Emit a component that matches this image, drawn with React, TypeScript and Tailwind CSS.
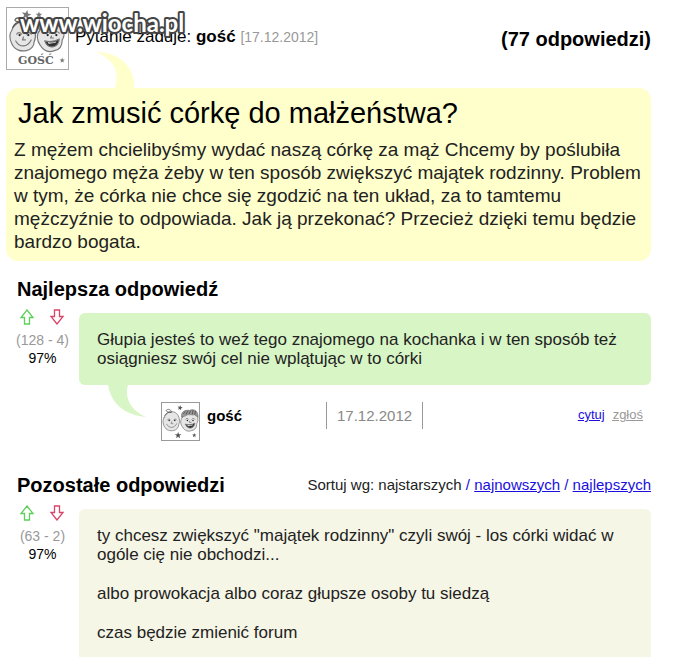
type VotesProps = {
    up: number
    down: number
    percent: number
}

const Faces = () => (
    <g fill="#e6e6e6" stroke="#777" strokeWidth="1.2" strokeLinecap="round" strokeLinejoin="round">
        <path d="M5 23 C2 27 3 33 5 37 C8 44 15 45 20 44 C25 43 28 39 28 35 C31 29 29 21 25 17 C19 11 8 14 5 23Z" />
        <path d="M34 23 C30 27 31 34 34 38 C38 45 44 46 49 44 C55 43 57 38 57 33 C61 27 58 19 54 15 C47 11 37 14 34 23Z" />
        <path d="M6 20 C8 16 12 14 16 15 C12 14 6 14 9 11 C12 9 17 11 17 15" fill="none" stroke="#555" />
        <path d="M33 22 C31 15 38 10 45 12 C53 8 60 14 59 23 C57 19 55 22 53 18 C50 21 48 17 45 19 C42 17 40 22 33 22Z" fill="#999" />
        <path d="M36 17 L39 14 M40 18 L43 13 M45 17 L47 13 M50 17 L51 12 M54 18 L55 13" fill="none" stroke="#444" />
        <path d="M10 27 C11 25 14 25 15 27 M20 27 C21 25 24 25 25 27 M9 34 C13 41 21 41 25 33" fill="none" />
        <path d="M39 26 C40 24 43 24 44 26 M49 26 C50 24 53 24 54 26" fill="none" />
        <path d="M39 34 C44 35 49 35 54 32 C53 42 42 43 39 34Z" fill="#333" />
        <path d="M42 35 C45 36 49 36 51 34 L50 36 L43 37Z" fill="#fff" stroke="none" />
        <g fill="#222" stroke="none">
            <circle cx="13" cy="28" r="1.2" />
            <circle cx="22" cy="28" r="1.2" />
            <circle cx="42" cy="28" r="1.2" />
            <circle cx="51" cy="28" r="1.2" />
        </g>
        <path d="M17 30 L16 33 L19 33 M46 29 L45 31 L48 31" fill="none" />
    </g>
)

const star = "M0 -5 L1.3 -1.7 L5 -1.5 L2.1 0.8 L3 4.5 L0 2.4 L-3 4.5 L-2.1 0.8 L-5 -1.5 L-1.3 -1.7Z"

const GuestAvatar = () => (
    <div className="relative h-[63px] w-[63px] shrink-0 border border-[#aaa] bg-white">
        <svg viewBox="0 0 63 63" className="h-full w-full" aria-hidden="true">
            <Faces />
            <g fill="#777">
                <path d={star} transform="translate(20 7) rotate(12)" />
                <path d={star} transform="translate(33 7) scale(.7)" />
                <path d={star} transform="translate(57 54) scale(.55)" />
            </g>
        </svg>
        <span className="absolute bottom-0 left-[11px] font-['DejaVu_Serif',serif] text-[11px] leading-4 font-bold text-[#666]">
            GOŚĆ
        </span>
    </div>
)

const SmallAvatar = () => (
    <svg viewBox="0 0 39 39" className="h-[39px] w-[39px] shrink-0 border border-[#999]" aria-hidden="true">
        <g transform="translate(-1 0) scale(.66)">
            <Faces />
        </g>
        <g fill="#555">
            <path d={star} transform="translate(19 5) rotate(12) scale(.55)" />
            <path d={star} transform="translate(17 34) scale(.7)" />
            <path d={star} transform="translate(34 34) scale(.45)" />
        </g>
    </svg>
)

const Arrow = ({ down = false }: { down?: boolean }) => (
    <svg
        viewBox="0 0 14 16"
        className={down ? "h-4 w-3.5 rotate-180" : "h-4 w-3.5"}
        fill="#fff"
        stroke={down ? "#d8466a" : "#5fd05a"}
        strokeWidth="1.3"
        aria-hidden="true"
    >
        <path d="M7 1 L13 8.5 H9.5 V15 H4.5 V8.5 H1 Z" />
    </svg>
)

const Votes = ({ up, down, percent }: VotesProps) => (
    <div className="flex w-[51px] shrink-0 flex-col items-center text-sm leading-[18px]">
        <div className="mb-1.5 flex w-full justify-between pr-1 pl-[3px]">
            <button type="button" aria-label="Głosuj za" className="cursor-pointer">
                <Arrow />
            </button>
            <button type="button" aria-label="Głosuj przeciw" className="cursor-pointer">
                <Arrow down />
            </button>
        </div>
        <span className="whitespace-nowrap text-[#999]">({up} - {down})</span>
        <span>{percent}%</span>
    </div>
)

const App = () => {
    const sortLinks = ["najnowszych", "najlepszych"]

    return (
        <div className="flex min-h-screen flex-col bg-white pt-[7px] pr-[22px] pl-1.5 font-['Liberation_Sans',Arial,sans-serif] text-black">
            <header className="relative flex h-[81px] items-start">
                <GuestAvatar />
                <p className="mt-5 ml-1.5 text-[17px] leading-5">
                    Pytanie zaduje: <b>gość</b>{" "}
                    <span className="text-sm text-[#999]">[17.12.2012]</span>
                </p>
                <strong className="mt-5 ml-auto text-xl leading-6">(77 odpowiedzi)</strong>

                {/* Watermark */}
                <svg className="absolute top-0 left-2 h-10 w-48 overflow-visible">
                    <text
                        x="6"
                        y="25"
                        fill="#fff"
                        stroke="#444"
                        strokeWidth="4"
                        strokeLinejoin="round"
                        paintOrder="stroke"
                        className="font-['Lato',sans-serif] text-2xl font-bold"
                    >
                        www.wiocha.pl
                    </text>
                </svg>

                {/* Speech bubble tail */}
                <svg viewBox="0 0 40 36" className="absolute bottom-0 left-[90px] h-9 w-10" fill="#ffffcc" aria-hidden="true">
                    <path d="M0 0 C22 0 40 14 38 36 H19 C25 18 15 6 0 0Z" />
                </svg>
            </header>

            <section className="rounded-xl bg-[#ffffcc] px-2 pt-2 pb-2">
                <h1 className="ml-1 text-[29px] leading-[34px]">Jak zmusić córkę do małżeństwa?</h1>
                <p className="mt-2 text-[19px] leading-[23px] text-[#222]">
                    Z mężem chcielibyśmy wydać naszą córkę za mąż Chcemy by poślubiła
                    znajomego męża żeby w ten sposób zwiększyć majątek rodzinny. Problem
                    w tym, że córka nie chce się zgodzić na ten układ, za to tamtemu
                    mężczyźnie to odpowiada. Jak ją przekonać? Przecież dzięki temu będzie
                    bardzo bogata.
                </p>
            </section>

            <section className="mt-4 ml-[11px]">
                <h2 className="text-xl leading-6 font-bold">Najlepsza odpowiedź</h2>
                <div className="mt-2 flex gap-[11px]">
                    <Votes up={128} down={4} percent={97} />
                    <div className="mt-1 flex-1">
                        <div className="rounded-md bg-[#d8f5c6] px-[18px] py-[17px]">
                            <p className="text-[17px] leading-[19px] text-[#222]">
                                Głupia jesteś to weź tego znajomego na kochanka i w ten sposób też
                                osiągniesz swój cel nie wplątując w to córki
                            </p>
                        </div>
                        <div className="relative flex items-start pt-[17px] pl-[82px]">
                            <svg viewBox="0 0 40 32" className="absolute top-0 left-[29px] h-8 w-10" fill="#d8f5c6" aria-hidden="true">
                                <path d="M0 0 C3 18 16 30 38 32 C24 26 16 14 20 0Z" />
                            </svg>
                            <SmallAvatar />
                            <b className="mt-1 ml-[7px] w-[119px] text-[15px] leading-5">gość</b>
                            <time className="border-x border-[#999] px-2.5 text-[15px] leading-[27px] text-[#888]">
                                17.12.2012
                            </time>
                            <div className="mt-1 mr-2 ml-auto flex gap-2 text-[13px] leading-[18px] underline">
                                <a href="#cytuj" className="text-[#1a0fe0]">cytuj</a>
                                <a href="#zglos" className="text-[#999]">zgłoś</a>
                            </div>
                        </div>
                    </div>
                </div>
            </section>

            <section className="mt-8 ml-[11px] flex flex-1 flex-col">
                <div className="flex items-center justify-between">
                    <h2 className="text-xl leading-6 font-bold">Pozostałe odpowiedzi</h2>
                    <p className="text-[15px] leading-[18px] text-[#222]">
                        Sortuj wg: najstarszych
                        {sortLinks.map((item) => (
                            <span key={item} className="text-[#1a0fe0]">
                                {" / "}
                                <a href={`#${item}`} className="underline">{item}</a>
                            </span>
                        ))}
                    </p>
                </div>
                <div className="mt-2 flex flex-1 gap-[11px]">
                    <Votes up={63} down={2} percent={97} />
                    <div className="mt-1 flex-1 space-y-5 rounded-t-md bg-[#f6f6e6] px-[18px] pt-[17px] text-[17px] leading-[19px] text-[#222]">
                        <p>
                            ty chcesz zwiększyć "majątek rodzinny" czyli swój - los córki widać w
                            ogóle cię nie obchodzi...
                        </p>
                        <p>albo prowokacja albo coraz głupsze osoby tu siedzą</p>
                        <p>czas będzie zmienić forum</p>
                    </div>
                </div>
            </section>
        </div>
    )
}

export default App
